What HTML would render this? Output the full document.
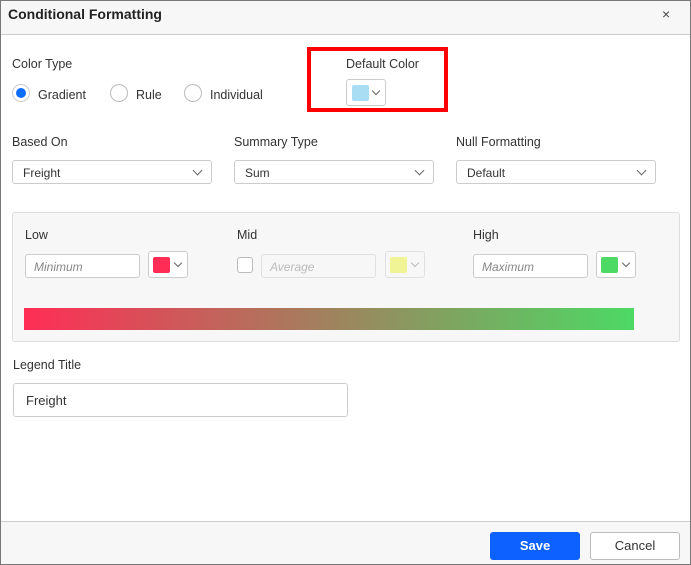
<!DOCTYPE html>
<html><head><style>
*{box-sizing:border-box;margin:0;padding:0}
body{width:691px;height:565px;font-family:"Liberation Sans",sans-serif;color:#333;background:#fff;position:relative;overflow:hidden}
.frame{position:absolute;left:0;top:0;width:691px;height:565px;border:1px solid #777}
.hdr{position:absolute;left:1px;top:1px;width:689px;height:34px;background:#f7f7f7;border-bottom:1px solid #ccc}
.a{position:absolute}
.t{font-size:12.5px;color:#333}
.dd{position:absolute;height:24px;border:1px solid #ccc;border-radius:3px;background:#fff;font-size:12px;padding:5px 10px}
.chev{position:absolute;width:7px;height:7px;border-right:1px solid #666;border-bottom:1px solid #666;transform:rotate(45deg)}
.radio{position:absolute;width:18px;height:18px;border:1px solid #bbb;border-radius:50%;background:#fff}
.inp{position:absolute;height:24px;border:1px solid #ccc;border-radius:3px;background:#fff;font-size:12px;font-style:italic;color:#888;padding:5px 8px}
.cp{position:absolute;width:40px;height:27px;border:1px solid #ccc;border-radius:3px;background:#fff}
.cp i{position:absolute;left:4px;top:5px;width:17px;height:16px;border-radius:2px}
.cp .chev{left:26px;top:8px;width:6px;height:6px}
</style></head><body>
<div class="hdr"></div>
<div class="a" style="left:8px;top:6px;font-size:14px;font-weight:bold;color:#222">Conditional Formatting</div>
<div class="a" style="left:662px;top:6px;font-size:14px;color:#444">×</div>

<div class="a t" style="left:12px;top:57px">Color Type</div>
<div class="radio" style="left:12px;top:84px;border-color:#ccc"><div style="position:absolute;left:3px;top:3px;width:10px;height:10px;border-radius:50%;background:#0d6efd"></div></div>
<div class="a t" style="left:38px;top:88px">Gradient</div>
<div class="radio" style="left:110px;top:84px"></div>
<div class="a t" style="left:136px;top:88px">Rule</div>
<div class="radio" style="left:184px;top:84px"></div>
<div class="a t" style="left:210px;top:88px">Individual</div>

<div class="a" style="left:307px;top:47px;width:141px;height:65px;border:4px solid #f00"></div>
<div class="a t" style="left:346px;top:57px">Default Color</div>
<div class="cp" style="left:346px;top:79px;width:40px;height:27px"><i style="background:#a8ddf3;left:5px"></i><div class="chev"></div></div>

<div class="a t" style="left:12px;top:135px">Based On</div>
<div class="a t" style="left:234px;top:135px">Summary Type</div>
<div class="a t" style="left:456px;top:135px">Null Formatting</div>
<div class="dd" style="left:12px;top:160px;width:200px">Freight<div class="chev" style="left:181px;top:6px"></div></div>
<div class="dd" style="left:234px;top:160px;width:200px">Sum<div class="chev" style="left:181px;top:6px"></div></div>
<div class="dd" style="left:456px;top:160px;width:200px">Default<div class="chev" style="left:181px;top:6px"></div></div>

<div class="a" style="left:12px;top:212px;width:668px;height:130px;background:#f7f7f7;border:1px solid #ddd;border-radius:3px"></div>
<div class="a t" style="left:25px;top:228px">Low</div>
<div class="a t" style="left:237px;top:228px">Mid</div>
<div class="a t" style="left:473px;top:228px">High</div>
<div class="inp" style="left:25px;top:254px;width:115px">Minimum</div>
<div class="cp" style="left:148px;top:251px"><i style="background:#ff2d55"></i><div class="chev"></div></div>
<div class="a" style="left:237px;top:257px;width:16px;height:16px;border:1px solid #bbb;border-radius:3px;background:#fff"></div>
<div class="inp" style="left:261px;top:254px;width:115px;color:#bbb;border-color:#e0e0e0;background:#f7f7f7">Average</div>
<div class="cp" style="left:385px;top:251px;border-color:#e0e0e0;background:#f7f7f7"><i style="background:#f0f494"></i><div class="chev" style="border-color:#bbb"></div></div>
<div class="inp" style="left:473px;top:254px;width:115px">Maximum</div>
<div class="cp" style="left:596px;top:251px"><i style="background:#4cd964"></i><div class="chev"></div></div>
<div class="a" style="left:24px;top:308px;width:610px;height:22px;background:linear-gradient(90deg,#ff2d55,#a0825e 50%,#4cd964)"></div>

<div class="a t" style="left:13px;top:358px">Legend Title</div>
<div class="a" style="left:13px;top:383px;width:335px;height:34px;border:1px solid #ccc;border-radius:3px;font-size:13px;padding:9px 12px">Freight</div>

<div class="a" style="left:1px;top:521px;width:689px;height:43px;background:#f7f7f7;border-top:1px solid #ccc"></div>
<div class="a" style="left:490px;top:532px;width:90px;height:28px;background:#0d62ff;border-radius:3px;color:#fff;font-weight:bold;font-size:13px;text-align:center;line-height:28px">Save</div>
<div class="a" style="left:590px;top:532px;width:90px;height:28px;background:#fff;border:1px solid #bbb;border-radius:3px;color:#333;font-size:13px;text-align:center;line-height:26px">Cancel</div>
<div class="frame"></div>
</body></html>
